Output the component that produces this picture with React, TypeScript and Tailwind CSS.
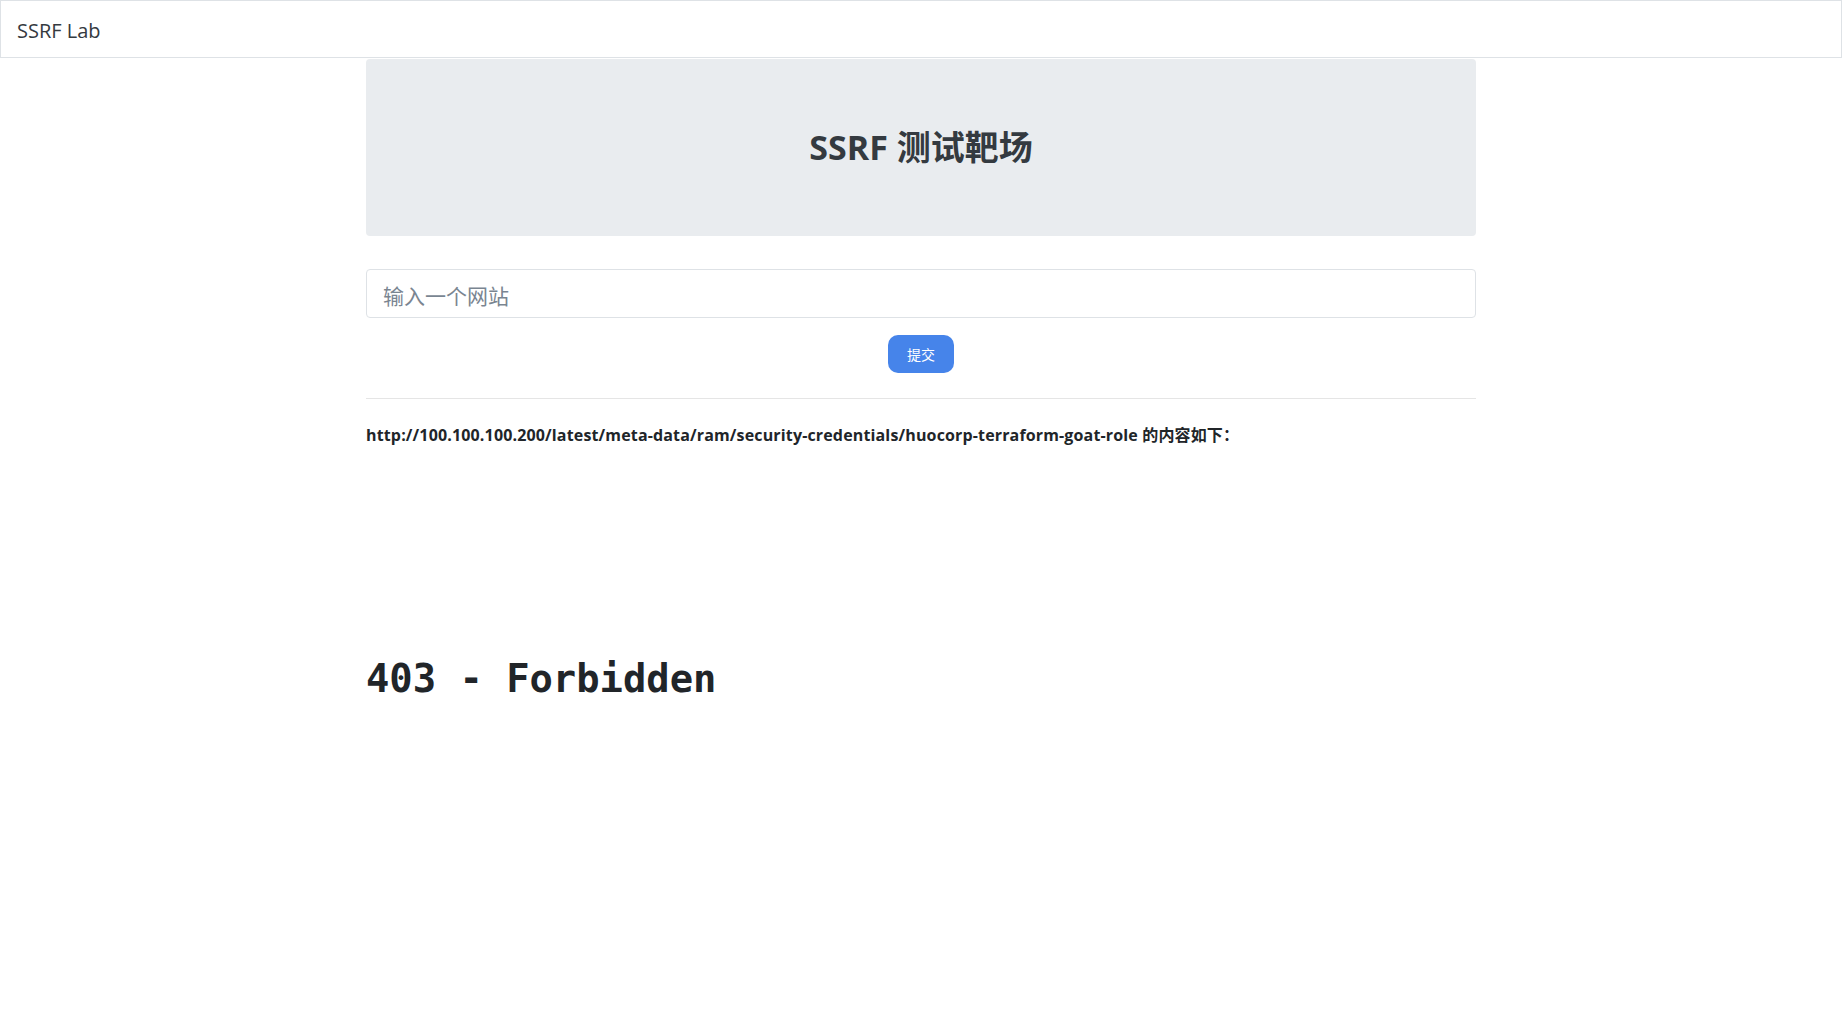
import React from "react";

export default function App() {
  return (
    <div className="min-h-[1009px] bg-white text-[#212529]" style={{ fontFamily: '"Open Sans", "Noto Sans CJK SC", sans-serif' }}>
      <nav className="h-[58px] border border-[#dee2e6] bg-white px-4 pt-[3px] flex items-center">
        <span className="text-[20px] leading-[30px] text-[#343a40]">SSRF Lab</span>
      </nav>
      <div className="w-[1140px] mx-auto px-[15px]">
        <div className="mt-px h-[177px] rounded-[4px] bg-[#e9ecef] flex items-center justify-center">
          <h2 className="text-[34px] font-bold text-[#343a40] leading-[1.2]">SSRF 测试靶场</h2>
        </div>
        <div className="mt-[33px]">
          <input
            className="w-full h-[49px] rounded-[4px] border border-[#dee2e6] px-4 pt-[4px] text-[21px] text-[#495057] placeholder:text-[#7a8591] outline-none"
            placeholder="输入一个网站"
          />
        </div>
        <div className="mt-[17px] flex justify-center">
          <button className="w-[66px] h-[38px] rounded-[10px] bg-[#4684ea] text-white text-[14px]">提交</button>
        </div>
        <hr className="mt-[25px] border-0 border-t border-[#e5e5e5]" />
        <p className="mt-[25px] text-[16px] font-bold leading-[22px] tracking-[0.15px] text-[#212529]">
          http://100.100.100.200/latest/meta-data/ram/security-credentials/huocorp-terraform-goat-role 的内容如下：
        </p>
        <h1
          className="mt-[210px] text-[38.8px] font-bold leading-[1.2] text-[#212529]"
          style={{ fontFamily: '"DejaVu Sans Mono", "Liberation Mono", monospace' }}
        >
          403 - Forbidden
        </h1>
      </div>
    </div>
  );
}
